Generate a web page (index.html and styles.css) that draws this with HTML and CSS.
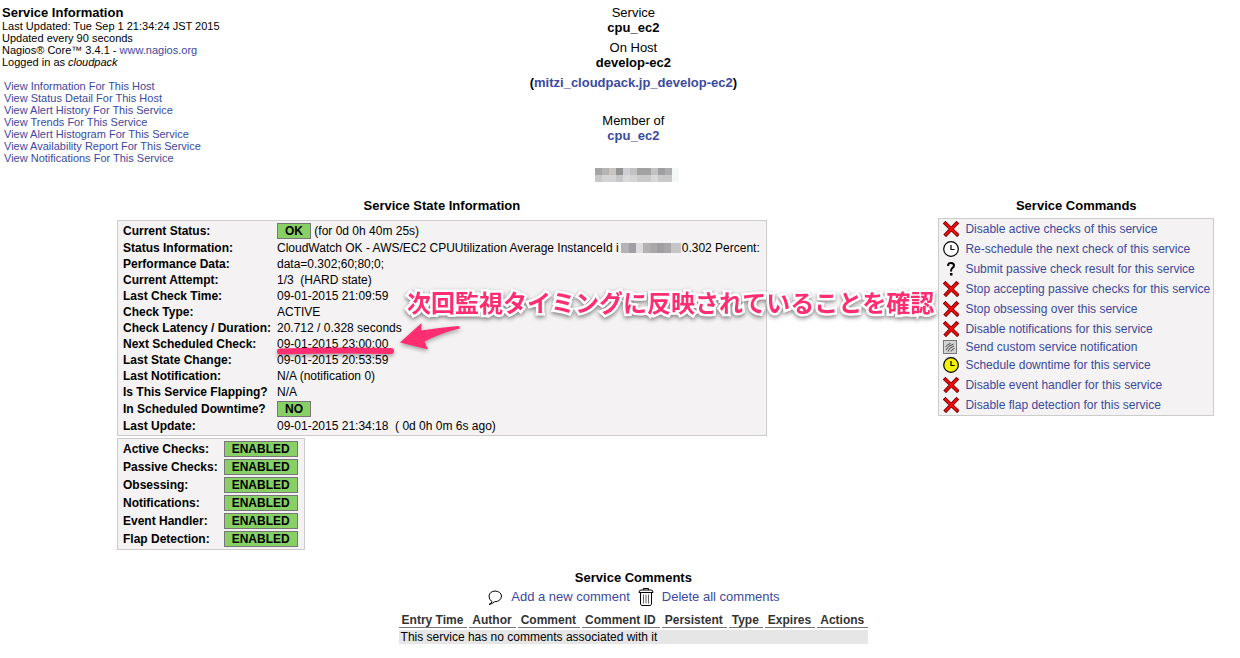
FILE: index.html
```html
<!DOCTYPE html>
<html lang="en">
<head>
<meta charset="utf-8">
<title>Service Information</title>
<link rel="stylesheet" href="styles.css">
</head>
<body>
<svg class="defs" aria-hidden="true">
  <symbol id="cross" viewBox="0 0 16 16">
    <path d="M2.500 2.500L14 13.500M13.500 2.500L3 13.500" fill="none" stroke="#6a0000" stroke-width="3.800" stroke-linecap="square"/>
    <path d="M2.500 2.500L14 13.500M13.500 2.500L3 13.500" fill="none" stroke="#f40a0a" stroke-width="2.200" stroke-linecap="square"/>
  </symbol>
  <symbol id="clock" viewBox="0 0 16 16">
    <circle cx="8" cy="8" r="7.300" stroke="#000" stroke-width="1.200"/>
    <path d="M8 4v4.500h3.500" fill="none" stroke="#000" stroke-width="1.200"/>
  </symbol>
  <symbol id="question" viewBox="0 0 16 16">
    <path d="M5.200 5V3.500Q5.600 2 8 2q3 0 3 2.500Q11 6 9.300 7 8 8 8 10.500" fill="none" stroke="#000" stroke-width="2"/>
    <rect x="7" y="12" width="2.500" height="2.500"/>
  </symbol>
  <symbol id="signal" viewBox="0 0 16 16">
    <rect x=".500" y="1.500" width="13" height="13" fill="#d4d4d4" stroke="#777"/>
    <path d="M2.500 8q2-3 5-3.500M3 11q2-4.500 7.500-6M5 12.500q1-4 6-5.500M8 12.500q.500-2 3.500-3" fill="none" stroke="#333" stroke-width=".900"/>
  </symbol>
</svg>
<div class="page">
  <header class="header">
    <div class="info">
      <h1 class="title">Service Information</h1>
      <div>Last Updated: Tue Sep 1 21:34:24 JST 2015</div>
      <div>Updated every 90 seconds</div>
      <div>Nagios® Core™ 3.4.1 - <a href="#">www.nagios.org</a></div>
      <div>Logged in as <i>cloudpack</i></div>
      <nav class="views">
        <a href="#">View Information For This Host</a>
        <a href="#">View Status Detail For This Host</a>
        <a href="#">View Alert History For This Service</a>
        <a href="#">View Trends For This Service</a>
        <a href="#">View Alert Histogram For This Service</a>
        <a href="#">View Availability Report For This Service</a>
        <a href="#">View Notifications For This Service</a>
      </nav>
    </div>
    <div class="subject">
      <div>Service</div>
      <div class="strong">cpu_ec2</div>
      <div class="spaced">On Host</div>
      <div class="strong">develop-ec2</div>
      <div class="strong spaced">(<a href="#">mitzi_cloudpack.jp_develop-ec2</a>)</div>
      <div class="member">Member of</div>
      <div class="strong"><a href="#">cpu_ec2</a></div>
      <svg class="redacted" width="84" height="14" viewBox="0 0 12 2" shape-rendering="crispEdges">
        <path d="M0 0h1v1H0z" fill="#a4a4a4"/><path d="M1 0h1v1H1z" fill="#b4b4b6"/><path d="M2 0h1v1H2z" fill="#c8c4c2"/><path d="M3 0h1v1H3z" fill="#929292"/><path d="M4 0h1v1H4z" fill="#cfcfd2"/><path d="M5 0h1v1H5z" fill="#c2c2c2"/><path d="M6 0h2v1H6z" fill="#a2a2a2"/><path d="M8 0h1v1H8z" fill="#c2c2c4"/><path d="M9 0h1v1H9z" fill="#a09f9f"/><path d="M10 0h1v1h-1z" fill="#adadb0"/><path d="M11 0h1v2h-1z" fill="#f6f8f8"/>
        <path d="M0 1h1v1H0z" fill="#c8c8c8"/><path d="M1 1h2v1H1z" fill="#d4d4d4"/><path d="M3 1h1v1H3z" fill="#c6c6c8"/><path d="M4 1h1v1H4z" fill="#dadadc"/><path d="M5 1h1v1H5z" fill="#d4d4d4"/><path d="M6 1h2v1H6z" fill="#cacaca"/><path d="M8 1h1v1H8z" fill="#d8d8d8"/><path d="M9 1h2v1H9z" fill="#c9c9ca"/>
      </svg>
    </div>
  </header>

  <main class="main">
    <section class="state">
      <h2 class="title">Service State Information</h2>
      <div class="panels">
        <div class="panel state-panel">
          <table class="facts">
            <tr class="tall"><th scope="row">Current Status:</th><td><span class="badge">OK</span> (for 0d 0h 40m 25s)</td></tr>
            <tr><th scope="row">Status Information:</th><td>CloudWatch OK - AWS/EC2 CPUUtilization Average InstanceId i<svg class="masked" width="60" height="10" viewBox="0 0 60 10" shape-rendering="crispEdges"><path d="M0 0h8v10H0z" fill="#b4b2b4"/><path d="M8 0h7v10H8z" fill="#a29ea4"/><path d="M15 0h7v10h-7z" fill="#dddcde"/><path d="M22 0h7v10h-7z" fill="#b3b2b0"/><path d="M29 0h7v10h-7z" fill="#aaa9aa"/><path d="M36 0h7v10h-7z" fill="#a09ea0"/><path d="M43 0h7v10h-7z" fill="#a8a6a8"/><path d="M50 0h10v10H50z" fill="#c6c6c8"/></svg>0.302 Percent:</td></tr>
            <tr><th scope="row">Performance Data:</th><td>data=0.302;60;80;0;</td></tr>
            <tr><th scope="row">Current Attempt:</th><td>1/3&nbsp; (HARD state)</td></tr>
            <tr><th scope="row">Last Check Time:</th><td>09-01-2015 21:09:59</td></tr>
            <tr><th scope="row">Check Type:</th><td>ACTIVE</td></tr>
            <tr><th scope="row">Check Latency / Duration:</th><td>20.712 / 0.328 seconds</td></tr>
            <tr><th scope="row">Next Scheduled Check:</th><td>09-01-2015 23:00:00</td></tr>
            <tr><th scope="row">Last State Change:</th><td>09-01-2015 20:53:59</td></tr>
            <tr><th scope="row">Last Notification:</th><td>N/A (notification 0)</td></tr>
            <tr><th scope="row">Is This Service Flapping?</th><td>N/A</td></tr>
            <tr class="tall"><th scope="row">In Scheduled Downtime?</th><td><span class="badge">NO</span></td></tr>
            <tr><th scope="row">Last Update:</th><td>09-01-2015 21:34:18&nbsp; ( 0d 0h 0m 6s ago)</td></tr>
          </table>
          <svg class="pointer" width="196" height="44" viewBox="0 0 196 44" fill="#ff2e70">
            <path d="M129 24.500L150.500 5l-.300 7.500Q168 9.500 187 8q2.500.500 1.500 2.500Q170 15 153.500 23.500l3.500 8z"/>
            <path d="M9 33.500Q60 32 120 33" fill="none" stroke="#ff2e70" stroke-width="6" stroke-linecap="round"/>
          </svg>
          <div class="callout" lang="ja">次回監視タイミングに反映されていることを確認</div>
        </div>
        <div class="panel">
          <table class="facts">
            <tr class="tall"><th scope="row">Active Checks:</th><td><span class="badge">ENABLED</span></td></tr>
            <tr class="tall"><th scope="row">Passive Checks:</th><td><span class="badge">ENABLED</span></td></tr>
            <tr class="tall"><th scope="row">Obsessing:</th><td><span class="badge">ENABLED</span></td></tr>
            <tr class="tall"><th scope="row">Notifications:</th><td><span class="badge">ENABLED</span></td></tr>
            <tr class="tall"><th scope="row">Event Handler:</th><td><span class="badge">ENABLED</span></td></tr>
            <tr class="tall"><th scope="row">Flap Detection:</th><td><span class="badge">ENABLED</span></td></tr>
          </table>
        </div>
      </div>
    </section>

    <section class="commands">
      <h2 class="title">Service Commands</h2>
      <ul class="panel command-list">
        <li><svg><use href="#cross"/></svg><a href="#">Disable active checks of this service</a></li>
        <li><svg fill="#fff"><use href="#clock"/></svg><a href="#">Re-schedule the next check of this service</a></li>
        <li><svg><use href="#question"/></svg><a href="#">Submit passive check result for this service</a></li>
        <li><svg><use href="#cross"/></svg><a href="#">Stop accepting passive checks for this service</a></li>
        <li><svg><use href="#cross"/></svg><a href="#">Stop obsessing over this service</a></li>
        <li><svg><use href="#cross"/></svg><a href="#">Disable notifications for this service</a></li>
        <li class="short"><svg><use href="#signal"/></svg><a href="#">Send custom service notification</a></li>
        <li><svg fill="#f0f000"><use href="#clock"/></svg><a href="#">Schedule downtime for this service</a></li>
        <li><svg><use href="#cross"/></svg><a href="#">Disable event handler for this service</a></li>
        <li><svg><use href="#cross"/></svg><a href="#">Disable flap detection for this service</a></li>
      </ul>
    </section>
  </main>

  <section class="comments">
    <h2 class="title">Service Comments</h2>
    <div class="actions">
      <svg width="16" height="18" viewBox="0 0 16 18" fill="#fff" stroke="#000"><path d="M5 13.500Q2 12 2 8q.500-4.500 6-5 6 .500 6.500 5-.500 5.500-7 5.800Q5 16 2 16.500 4.500 15.500 5 13.500z"/></svg>
      <a href="#">Add a new comment</a>
      <svg width="16" height="18" viewBox="0 0 16 18" fill="none" stroke="#000"><path d="M5.500 2V.500h5V2M1 4.500q0-2.500 2-2.500h10q2 0 2 2.500zM2.500 5v11l1 1.500h9l1-1.500V5"/><path d="M5.500 6.500v9M8 6.500v9M10.500 6.500v9" stroke="#666"/></svg>
      <a href="#">Delete all comments</a>
    </div>
    <table class="comment-table">
      <thead><tr><th>Entry Time</th><th>Author</th><th>Comment</th><th>Comment ID</th><th>Persistent</th><th>Type</th><th>Expires</th><th>Actions</th></tr></thead>
      <tbody><tr><td colspan="8">This service has no comments associated with it</td></tr></tbody>
    </table>
  </section>
</div>
</body>
</html>
```
FILE: styles.css
```css
body {
  margin: 0;
  overflow-x: hidden;
  background: #fff;
  color: #000;
  font: 12px/16px "Liberation Sans", Arial, sans-serif;
}

a {
  color: #3b4a9c;
  text-decoration: none;
}

.defs {
  display: none;
}

.page {
  box-sizing: border-box;
  width: 102%;
  padding: 5px 0 8px 2px;
}

.title {
  margin: 0;
  font-size: 13px;
  line-height: 15px;
  font-weight: bold;
}

.header {
  display: grid;
  grid-template-columns: 1fr auto 1fr;
  margin-bottom: 16px;
}

.info {
  font-size: 11px;
  line-height: 12px;
}

.views {
  display: flex;
  flex-direction: column;
  align-items: flex-start;
  padding: 12px 0 0 2px;
}

.subject {
  display: flex;
  flex-direction: column;
  align-items: center;
  font-size: 13px;
  line-height: 15px;
}

.strong {
  font-weight: bold;
}

.spaced {
  margin-top: 5px;
}

.member {
  margin-top: 23px;
}

.redacted {
  margin-top: 25px;
  margin-left: 8px;
}

.main {
  display: grid;
  grid-template-columns: 70fr 30fr;
  gap: 6px;
  align-items: start;
}

.state,
.commands,
.comments {
  display: flex;
  flex-direction: column;
  align-items: center;
}

.panels {
  display: flex;
  flex-direction: column;
  align-items: flex-start;
  gap: 2px;
  margin-top: 7px;
}

.panel {
  border: 1px solid #ccc;
  background: #f4f2f2;
}

.panels .panel {
  padding: 1px 5px;
}

.state-panel {
  position: relative;
}

.facts {
  border-collapse: collapse;
  white-space: nowrap;
}

.facts tr {
  height: 16px;
}

.facts .tall {
  height: 18px;
}

.facts th,
.facts td {
  padding: 0 1px 0 0;
  line-height: 16px;
  text-align: left;
}

.facts th {
  padding-right: 6px;
}

.badge {
  display: inline-block;
  border: 1px solid #777;
  padding: 0 7px;
  background: #88d066;
  line-height: 14px;
  font-weight: bold;
}

.masked {
  margin: 0 1px 0 2px;
  vertical-align: -1px;
}

.pointer {
  position: absolute;
  left: 153px;
  top: 97px;
  filter: drop-shadow(0 2px 2px #0005);
}

.callout {
  position: absolute;
  left: 289px;
  top: 64px;
  color: #ff2e70;
  font: bold 24px/34px "Noto Sans CJK JP", sans-serif;
  white-space: nowrap;
  -webkit-text-stroke: 5px #fff;
  paint-order: stroke fill;
  filter: drop-shadow(0 2px 2px #0007);
}

.command-list {
  margin: 5px 0 0;
  padding: 0 3px 0 4px;
  list-style: none;
}

.command-list li {
  display: flex;
  align-items: center;
  gap: 6px;
  height: 20px;
  white-space: nowrap;
}

.command-list .short {
  height: 16px;
}

.command-list svg {
  width: 16px;
  height: 16px;
}

.comments {
  margin-top: 20px;
}

.actions {
  display: flex;
  align-items: center;
  gap: 8px;
  margin: 2px 0 4px;
  font-size: 13px;
  line-height: 20px;
}

.comment-table {
  border-spacing: 2px;
  white-space: nowrap;
}

.comment-table th {
  padding: 0 4px 0 3px;
  border-bottom: 1px solid #777;
  color: #333;
  line-height: 14px;
}

.comment-table td {
  padding: 0 2px;
  background: #e6e6e6;
  line-height: 14px;
}
```
